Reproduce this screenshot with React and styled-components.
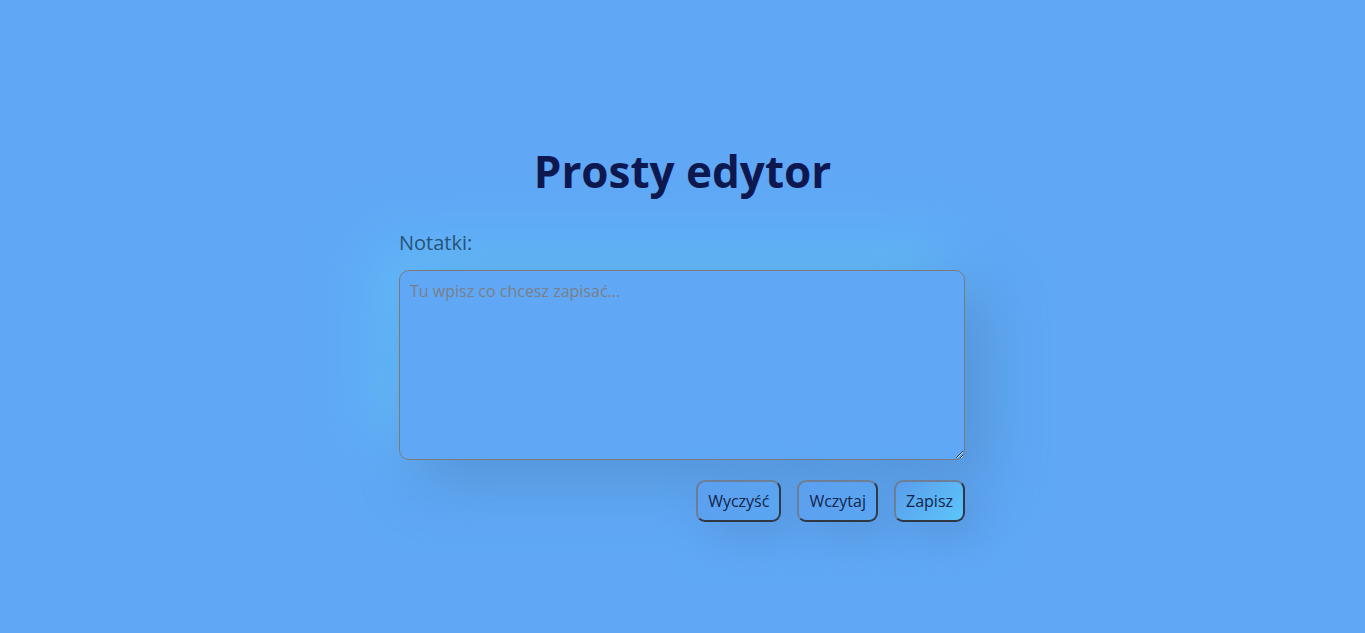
import React from 'react'
import styled, { createGlobalStyle } from 'styled-components'

const GlobalStyle = createGlobalStyle`
  html, body {
    margin: 0;
    padding: 0;
    background: #60a8f5;
    font-family: "Open Sans", "Noto Sans", sans-serif;
  }
`

const Page = styled.main`
  min-height: 100vh;
  display: flex;
  flex-direction: column;
  align-items: center;
  padding-top: 145px;
  box-sizing: border-box;
`

const Title = styled.h1`
  position: relative;
  z-index: 1;
  margin: 0 0 31px;
  font-size: 44px;
  line-height: 53px;
  font-weight: 700;
  color: #0e1850;
`

const Editor = styled.section`
  width: 566px;
  margin-right: 1px;
  display: flex;
  flex-direction: column;
`

const Label = styled.label`
  position: relative;
  z-index: 1;
  font-size: 20px;
  line-height: 27px;
  color: #285276;
  margin-bottom: 14px;
`

const Notes = styled.textarea`
  box-sizing: border-box;
  width: 100%;
  height: 190px;
  padding: 9px 10px;
  border: 1px solid #7a7a7a;
  border-radius: 10px;
  background: #60a8f5;
  box-shadow: 20px 20px 60px #5592d6, -20px -20px 60px #63bff9;
  font-family: inherit;
  font-size: 16px;
  color: #10204a;
  resize: vertical;
  outline: none;
  &::placeholder {
    color: #7b7f88;
  }
`

const Actions = styled.div`
  display: flex;
  justify-content: flex-end;
  gap: 16px;
  margin-top: 20px;
`

const Button = styled.button`
  padding: 8px 10px;
  border: 2px outset #6d7e96;
  border-radius: 9px;
  font-family: inherit;
  font-size: 16px;
  line-height: 22px;
  color: #13254a;
  cursor: pointer;
  box-shadow: 14px 14px 40px #5796dc;
  background: ${p => p.$primary
    ? 'linear-gradient(135deg, #5a9cec 0%, #5cc6fa 100%)'
    : 'linear-gradient(135deg, #5c9ff0 0%, #5aa6f2 100%)'};
`

export default function App() {
  return (
    <>
      <GlobalStyle />
      <Page>
        <Title>Prosty edytor</Title>
        <Editor>
          <Label htmlFor="notes">Notatki:</Label>
          <Notes id="notes" placeholder="Tu wpisz co chcesz zapisać..." />
          <Actions>
            <Button>Wyczyść</Button>
            <Button>Wczytaj</Button>
            <Button $primary>Zapisz</Button>
          </Actions>
        </Editor>
      </Page>
    </>
  )
}
